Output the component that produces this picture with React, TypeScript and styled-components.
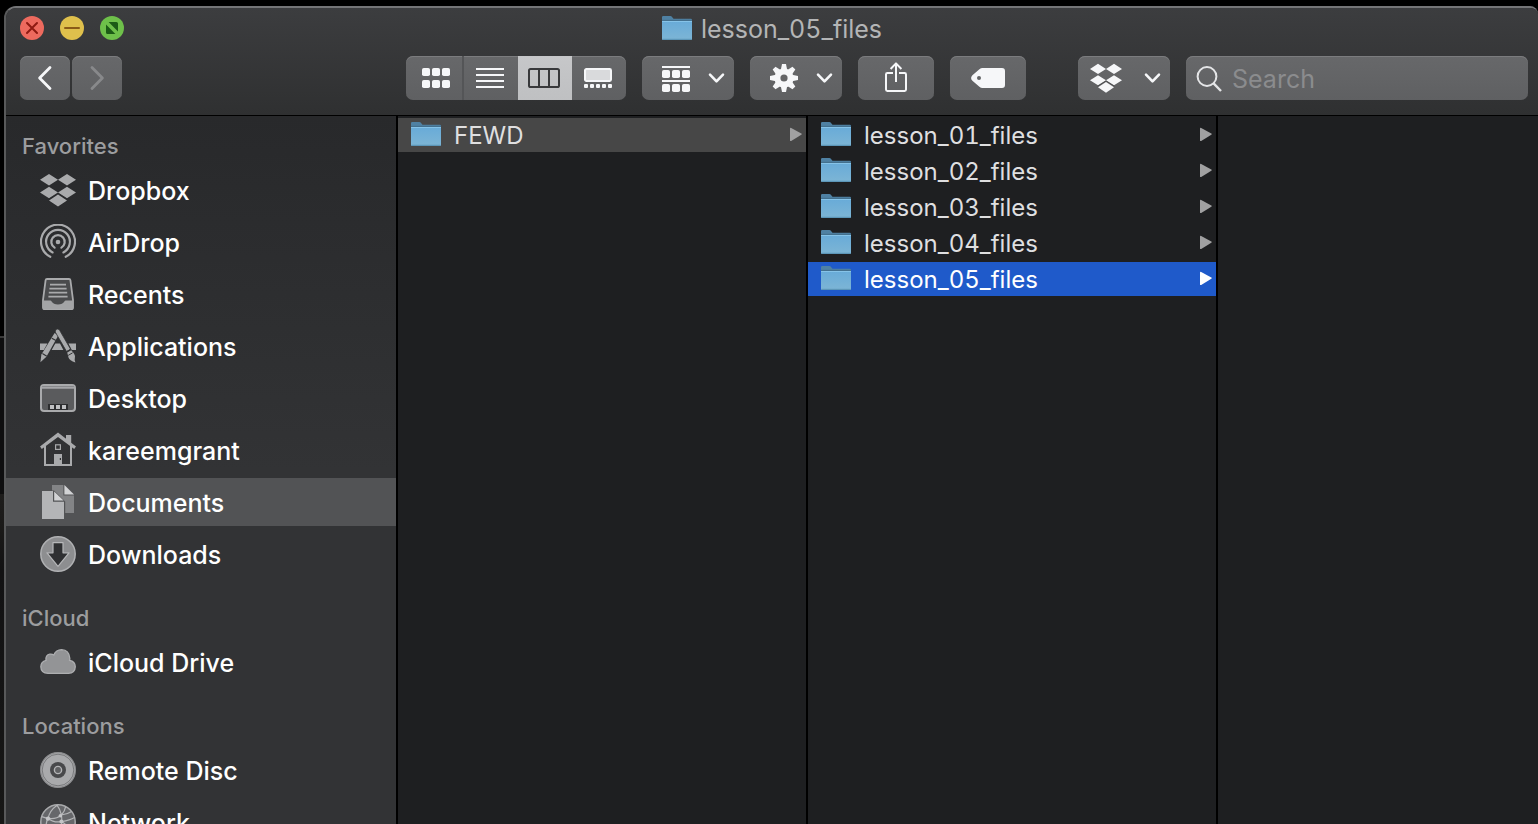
import React from "react";
import styled, { createGlobalStyle, css } from "styled-components";

const GlobalStyle = createGlobalStyle`
  *, *::before, *::after { box-sizing: border-box; }
  body {
    margin: 0;
    background: #000;
    font-family: Inter, "Liberation Sans", sans-serif;
    font-variant-numeric: tabular-nums;
    -webkit-font-smoothing: antialiased;
  }
  button, input { font: inherit; color: inherit; }
`;

/* ---------- layout ---------- */

const Desk = styled.div`
  height: 100vh;
  overflow: hidden;
  padding: 6px 0 0 4px;
  background: linear-gradient(#000 336px, #3a3a3a 336px, #3a3a3a 338px, #0e0e0f 338px, #0e0e0f 494px, #1e1d1c 494px, #1a1918 530px, #121213 570px, #171716);
`;

const Window = styled.div`
  height: 100%;
  display: flex;
  flex-direction: column;
  overflow: hidden;
  border-left: 2px solid #58595a;
  border-top: 2px solid #747577;
  border-radius: 12px 8px 0 0;
  background: #1e1f21;
`;

const Header = styled.header`
  flex: none;
  background: linear-gradient(#3c3d3f, #2f3031);
  border-bottom: 1px solid #000;
`;

const TitleBar = styled.div`
  display: grid;
  grid-template-columns: 1fr auto 1fr;
  align-items: center;
  height: 40px;
  padding: 0 14px;
`;

const Lights = styled.div`
  display: flex;
  gap: 16px;
`;

const Light = styled.button<{ $color: string }>`
  width: 24px;
  height: 24px;
  padding: 0;
  border: 0;
  border-radius: 50%;
  background: ${(p) => p.$color};
  svg { display: block; }
`;

const Title = styled.h1`
  display: flex;
  align-items: center;
  gap: 9px;
  margin: 0;
  padding-top: 2px;
  font-size: 25px;
  line-height: 32px;
  font-weight: 400;
  color: #b4b5b6;
`;

const Toolbar = styled.div`
  display: flex;
  align-items: center;
  height: 67px;
  padding: 8px 10px 15px 14px;
`;

const Spacer = styled.div`
  flex: 1;
`;

const Group = styled.div<{ $gap?: number; $end?: number }>`
  display: flex;
  gap: ${(p) => p.$gap ?? 0}px;
  margin-right: ${(p) => p.$end ?? 0}px;
`;

const surface = css`
  background: linear-gradient(#67686a, #5f6062);
  box-shadow: inset 0 1px 0 #7b7c7e;
`;

const ToolButton = styled.button<{ $width: number; $menu?: boolean; $start?: number }>`
  ${surface}
  display: flex;
  align-items: center;
  justify-content: ${(p) => (p.$menu ? "space-between" : "center")};
  width: ${(p) => p.$width}px;
  height: 44px;
  padding: ${(p) => (p.$menu ? `0 9px 0 ${p.$start ?? 20}px` : "0")};
  border: 0;
  border-radius: 7px;
  color: #f6f7f9;
  &:disabled { color: #88898b; }
`;

const Segments = styled.div`
  ${surface}
  display: flex;
  border-radius: 7px;
  overflow: hidden;
  margin-right: 16px;
`;

const Segment = styled.button<{ $first?: boolean }>`
  display: flex;
  align-items: center;
  justify-content: center;
  width: ${(p) => (p.$first ? 58 : 54)}px;
  height: 44px;
  padding: ${(p) => (p.$first ? "0 0 0 4px" : "0 2px 0 0")};
  border: 0;
  border-right: ${(p) => (p.$first ? "2px solid #545557" : "0")};
  background: transparent;
  color: #f6f7f9;
  &[aria-pressed="true"] {
    background: linear-gradient(#c6c7c9, #bfc0c2);
    color: #38393b;
  }
`;

const SearchField = styled.label`
  ${surface}
  display: flex;
  align-items: center;
  gap: 10px;
  width: 342px;
  height: 44px;
  padding: 2px 10px 0;
  border-radius: 7px;
  color: #e4e5e7;
`;

const SearchInput = styled.input`
  flex: 1;
  min-width: 0;
  padding: 0;
  border: 0;
  outline: 0;
  background: transparent;
  font-size: 25px;
  line-height: 32px;
  &::placeholder { color: #8b8c8e; opacity: 1; }
`;

const Body = styled.div`
  flex: 1;
  min-height: 0;
  display: flex;
`;

const Sidebar = styled.nav`
  flex: none;
  width: 392px;
  overflow: hidden;
  padding-top: 10px;
  border-right: 2px solid #000;
  background: linear-gradient(#28292b, #323335 50%, #323335);
`;

const Section = styled.section`
  margin-bottom: 20px;
`;

const SectionTitle = styled.h2`
  margin: 0;
  padding-left: 16px;
  font-size: 22px;
  line-height: 40px;
  font-weight: 500;
  color: #9c9d9f;
`;

const Places = styled.ul`
  display: flex;
  flex-direction: column;
  gap: 4px;
  margin: 0;
  padding: 0;
  list-style: none;
`;

const Place = styled.a`
  display: flex;
  align-items: center;
  gap: 12px;
  height: 48px;
  padding-left: 34px;
  font-size: 25px;
  line-height: 32px;
  font-weight: 500;
  color: #fff;
  text-decoration: none;
  &[aria-current] { background: #525355; }
  svg { flex: none; }
`;

const PlaceName = styled.span`
  padding-top: 2px;
`;

const Column = styled.ul<{ $last?: boolean }>`
  display: flex;
  flex-direction: column;
  gap: 2px;
  flex: ${(p) => (p.$last ? "1" : "0 0 410px")};
  margin: 0;
  padding: 2px 0 0;
  border-right: ${(p) => (p.$last ? "0" : "2px solid #000")};
  list-style: none;
`;

const Entry = styled.button<{ $tone?: "open" | "selected" }>`
  display: flex;
  align-items: center;
  width: 100%;
  height: 34px;
  padding: 0 4px 0 13px;
  border: 0;
  background: ${(p) => (p.$tone === "selected" ? "#1f5aca" : p.$tone === "open" ? "#474747" : "transparent")};
  color: ${(p) => (p.$tone === "selected" ? "#fff" : "#dfdfe0")};
  font-size: 24px;
  line-height: 32px;
  text-align: left;
`;

const EntryName = styled.span`
  flex: 1;
  padding: 2px 0 0 13px;
`;

const Disclosure = styled.svg<{ $bright?: boolean }>`
  color: ${(p) => (p.$bright ? "#fff" : "#a0a0a1")};
`;

/* ---------- icons ---------- */

const Folder = () => (
  <svg width="30" height="26" viewBox="0 0 30 26" aria-hidden="true">
    <defs>
      <linearGradient id="folderFront" x1="0" y1="0" x2="0" y2="1">
        <stop offset="0" stopColor="#68abd8" />
        <stop offset="1" stopColor="#7db5d5" />
      </linearGradient>
    </defs>
    <path d="M0 1.2Q0 0 1.2 0H8.4Q9.3 0 9.9 .8L11.2 2.4Q11.6 2.8 12.4 2.8H28.8Q30 2.8 30 4V11H0Z" fill="#4f81a3" />
    <path d="M0 5H30V22.8Q30 24 28.8 24H1.2Q0 24 0 22.8Z" fill="url(#folderFront)" />
    <path d="M0 4.4H30" stroke="#3f6a86" strokeWidth=".8" />
    <path d="M0 5.5H30" stroke="#86c3e8" strokeWidth="1" />
    <path d="M.4 23.4H29.6" stroke="#5c96b8" strokeWidth="1.2" />
  </svg>
);

const Triangle = ({ bright }: { bright?: boolean }) => (
  <Disclosure $bright={bright} width="12" height="16" viewBox="0 0 12 16" aria-hidden="true">
    <path d="M0 1.6Q0 .4 1.2 1L11.3 6.4Q12.4 7.1 11.3 7.8L1.2 13.9Q0 14.5 0 13.2Z" fill="currentColor" />
  </Disclosure>
);

const Chevron = () => (
  <svg width="17" height="12" viewBox="0 0 17 12" fill="none" stroke="currentColor" strokeWidth="2.6" strokeLinecap="round" strokeLinejoin="round" aria-hidden="true">
    <path d="M2 2.6L8.5 9.4L15 2.6" />
  </svg>
);

const Arrow = ({ d }: { d: string }) => (
  <svg width="18" height="26" viewBox="0 0 18 26" fill="none" stroke="currentColor" strokeWidth="2.8" strokeLinecap="round" strokeLinejoin="round" aria-hidden="true">
    <path d={d} />
  </svg>
);

const cells = (y: number, size: number) =>
  [0, 10, 20].map((x) => <rect key={`${x}-${y}`} x={x} y={y} width={size} height={size} rx="1.8" />);

const GridIcon = () => (
  <svg width="28" height="20" viewBox="0 0 28 20" fill="currentColor" aria-hidden="true">
    {cells(0, 8)}
    {cells(12, 8)}
  </svg>
);

const ListIcon = () => (
  <svg width="28" height="20" viewBox="0 0 28 20" fill="currentColor" aria-hidden="true">
    {[0, 6, 12, 18].map((y) => <rect key={y} y={y} width="28" height="2" />)}
  </svg>
);

const ColumnsIcon = () => (
  <svg width="32" height="20" viewBox="0 0 32 20" fill="none" stroke="currentColor" strokeWidth="2" aria-hidden="true">
    <rect x="1" y="1" width="30" height="18" rx="1.6" />
    <path d="M11 1V19M21 1V19" />
  </svg>
);

const GalleryIcon = () => (
  <svg width="28" height="20" viewBox="0 0 28 20" fill="currentColor" aria-hidden="true">
    <rect x="1" y="1" width="26" height="12" rx="1.4" fill="#d9dadc" stroke="currentColor" strokeWidth="2" />
    {[0, 6, 12, 18, 24].map((x) => <rect key={x} x={x} y="16" width="4" height="4" rx="1" />)}
  </svg>
);

const ArrangeIcon = () => (
  <svg width="28" height="28" viewBox="0 0 28 28" fill="currentColor" aria-hidden="true">
    <rect y="2" width="28" height="2" />
    {cells(6, 8)}
    <rect y="16" width="28" height="2" />
    {cells(20, 8)}
  </svg>
);

const GearIcon = () => (
  <svg width="28" height="28" viewBox="-14 -14 28 28" fill="currentColor" aria-hidden="true">
    {[0, 45, 90, 135].map((a) => <path key={a} d="M-2 -14H2L3.2 -8V8L2 14H-2L-3.2 8V-8Z" transform={`rotate(${a})`} />)}
    <circle r="9.6" />
    <circle r="3.6" fill="#646567" />
  </svg>
);

const ShareIcon = () => (
  <svg width="24" height="32" viewBox="0 0 24 32" fill="none" stroke="currentColor" strokeWidth="2" aria-hidden="true">
    <path d="M9 11H3.4Q2 11 2 12.4V27.6Q2 29 3.4 29H20.6Q22 29 22 27.6V12.4Q22 11 20.6 11H15" />
    <path d="M12 20V1.4" />
    <path d="M6.6 7L12 1.4L17.4 7" strokeLinejoin="round" />
  </svg>
);

const TagIcon = () => (
  <svg width="34" height="20" viewBox="0 0 34 20" aria-hidden="true">
    <path d="M8.4 1.2Q9.8 0 11.6 0H31Q34 0 34 3V17Q34 20 31 20H11.6Q9.8 20 8.4 18.8L1.4 12.8Q-1.2 10 1.4 7.2Z" fill="currentColor" />
    <circle cx="8" cy="10" r="2" fill="#646567" />
  </svg>
);

const DropboxIcon = ({ size, color }: { size: number; color: string }) => (
  <svg width={size} height={size} viewBox="0 0 36 36" fill={color} aria-hidden="true">
    <path d="M9 2L18 7.8L9 13.6L0 7.8ZM27 2L36 7.8L27 13.6L18 7.8ZM9 14.8L18 20.6L9 26.2L0 20.6ZM27 14.8L36 20.6L27 26.2L18 20.6ZM18 22.4L27 28.4L18 34.6L9 28.4Z" />
    <path d="M8.6 27.2L18 21.2L27.4 27.2" fill="none" stroke="#2b2c2e" strokeOpacity=".45" strokeWidth="1" />
  </svg>
);

const SearchIcon = () => (
  <svg width="26" height="26" viewBox="0 0 26 26" fill="none" stroke="currentColor" strokeWidth="2" aria-hidden="true">
    <circle cx="11" cy="10.5" r="9.4" />
    <path d="M17.6 17.4L25 25" strokeWidth="2.4" />
  </svg>
);

const Glyph = ({ children }: { children: React.ReactNode }) => (
  <svg width="36" height="36" viewBox="0 0 36 36" fill="#a9aaac" aria-hidden="true">{children}</svg>
);

const AirDropIcon = () => (
  <Glyph>
    <g fill="none" stroke="#a9aaac" strokeWidth="2.2" strokeLinecap="round">
      <path d="M10.3 32.8A17 17 0 1 1 25.7 32.8" />
      <path d="M12.6 28.4A11.9 11.9 0 1 1 23.4 28.4" />
      <path d="M14.6 23.6A6.7 6.7 0 1 1 21.4 23.6" />
    </g>
    <circle cx="18" cy="18" r="2.3" />
  </Glyph>
);

const RecentsIcon = () => (
  <Glyph>
    <path d="M7 3H29Q30.2 3 30.4 4.2L33 24V31.5Q33 33.2 31.3 33.2H4.7Q3 33.2 3 31.5V24L5.6 4.2Q5.8 3 7 3Z" fill="#4a4b4d" stroke="#a9aaac" strokeWidth="1.8" />
    <path d="M10 8.7H26M9.4 12.7H26.6M8.8 16.7H27.2M8.4 20.7H27.6" stroke="#a9aaac" strokeWidth="1.7" />
    <path d="M3 24.4H10.2Q11.2 24.4 11.6 25.4Q13.4 28.4 18 28.4Q22.6 28.4 24.4 25.4Q24.8 24.4 25.8 24.4H33V32Q33 33 32 33H4Q3 33 3 32Z" fill="#a3a4a6" />
  </Glyph>
);

const ApplicationsIcon = () => (
  <Glyph>
    <path d="M0 15.6H7.4L3.8 22H0ZM15.3 15.6H20L23.4 22H11.7ZM28.4 15.6H36V22H31.8Z" />
    <path d="M14.6 5L18.4 7.2L6.4 28.8L.4 34.2L1.4 26.6Z" />
    <path d="M11.8 10.2L16 12.6M2.4 25.6L6.8 28.2" stroke="#323335" strokeWidth="1.2" />
    <path d="M15.4 3Q15.6 .8 17.8 1Q19 1.2 19.8 2.6L30.6 21.2L26.6 23.6L15.6 4.6Q15.2 3.8 15.4 3Z" stroke="#323335" strokeWidth=".8" />
    <path d="M27.2 24.6L31.2 22.2Q34.8 25.8 35 28.2Q34.2 32 35.4 34.6Q29.4 32.6 28.6 29.8Z" />
    <path d="M26.4 23.8L30.8 21.2M28.2 27.4L32.6 24.8" stroke="#323335" strokeWidth="1" />
  </Glyph>
);

const DesktopIcon = () => (
  <Glyph>
    <rect x="1" y="5" width="34" height="26" rx="3" fill="#5a5b5d" stroke="#a9aaac" strokeWidth="2" />
    <path d="M2 7.4H34" stroke="#a9aaac" strokeWidth="2.6" />
    <path d="M2 6.6H34" stroke="#7e7f81" strokeWidth=".8" />
    <rect x="8" y="24" width="20" height="6" fill="#2d2e30" />
    <path d="M10 25h4v4h-4zM16 25h4v4h-4zM22 25h4v4h-4z" fill="#c0c1c3" />
  </Glyph>
);

const HomeIcon = () => (
  <Glyph>
    <path d="M4 14V34H32V14L30 12.4V32H6V12.4Z" />
    <path d="M26 9.6V3H31.2V13.6Z" />
    <path d="M18 .6L36 14.4L34.2 17L18 5L1.8 17L0 14.4Z" />
    <rect x="15.6" y="12.8" width="4.8" height="4.6" fill="none" stroke="#a9aaac" strokeWidth="1.2" />
    <rect x="14" y="22" width="8" height="11" />
    <rect x="19.8" y="26" width="1.2" height="2" fill="#323335" />
  </Glyph>
);

const DocumentsIcon = () => (
  <Glyph>
    <path d="M12 1H23.4V11.6H34V29H25.2V17.6L14 6.4H12Z" fill="#838486" />
    <path d="M24.4 1L34 10.4H24.4Z" fill="#d2d3d5" />
    <path d="M2 7H13V17.8H24V35H2Z" fill="#b4b5b7" />
    <path d="M14.2 7.4L23.6 16.6H14.2Z" fill="#d2d3d5" />
  </Glyph>
);

const DownloadsIcon = () => (
  <Glyph>
    <circle cx="18" cy="18" r="17.2" fill="#8d8e90" stroke="#b0b1b3" strokeWidth="1.5" />
    <path d="M13 6.6H23V16.8H29L18 30.4L7 16.8H13Z" fill="#2f3032" stroke="#b6b7b9" strokeWidth="1.2" strokeLinejoin="round" />
  </Glyph>
);

const CloudIcon = () => (
  <Glyph>
    <path d="M8 29.4Q1 29.2 .8 22.8Q.9 17.6 6 16.4Q5.4 11 9.8 10.2Q12 9.8 13.8 11Q16 5.8 21.6 5.7Q29 6 29.8 14.2Q29.8 15.4 29.6 16.4Q35.2 17.4 35.3 22.8Q35 29.2 28.4 29.4Z" fill="#939496" stroke="#adaeb0" strokeWidth="1.3" />
  </Glyph>
);

const DiscIcon = () => (
  <Glyph>
    <circle cx="18" cy="18" r="17.4" fill="#a9aaac" stroke="#8d8e90" strokeWidth="1.2" />
    <circle cx="18" cy="18" r="15.8" fill="none" stroke="#737476" strokeWidth=".9" />
    <circle cx="18" cy="18" r="8" fill="#48494b" />
    <circle cx="18" cy="18" r="3.6" fill="#5f6062" stroke="#b4b5b7" strokeWidth="1.4" />
  </Glyph>
);

const NetworkIcon = () => (
  <Glyph>
    <circle cx="18" cy="18" r="17.2" fill="#66676a" stroke="#a9aaac" strokeWidth="1.5" />
    <g fill="none" stroke="#b4b5b7" strokeWidth="1.2">
      <path d="M1.6 12.6Q14 17.4 21.4 11Q25 7 25.6 2.6M8 14.4Q9.6 6.6 17 1.2M21.4 11Q27 10.6 31.6 7.6M21.4 11Q20 5 17 1.2M8 14.4Q5 20 6.4 29M8 14.4Q14 19 21.6 17.6Q30 16 34.6 13.4M21.4 11Q23 22 18 34.6M21.6 17.6Q29 22 30 28" />
    </g>
    <circle cx="8" cy="14.6" r="2.2" fill="#c4c5c7" />
    <circle cx="20.4" cy="11.8" r="1.8" fill="#c4c5c7" />
    <circle cx="21.4" cy="17.6" r="2" fill="#c4c5c7" />
  </Glyph>
);

/* ---------- data ---------- */

const sections = [
  {
    title: "Favorites",
    places: [
      { name: "Dropbox", icon: <DropboxIcon size={36} color="#a9aaac" /> },
      { name: "AirDrop", icon: <AirDropIcon /> },
      { name: "Recents", icon: <RecentsIcon /> },
      { name: "Applications", icon: <ApplicationsIcon /> },
      { name: "Desktop", icon: <DesktopIcon /> },
      { name: "kareemgrant", icon: <HomeIcon /> },
      { name: "Documents", icon: <DocumentsIcon />, current: true },
      { name: "Downloads", icon: <DownloadsIcon /> },
    ],
  },
  { title: "iCloud", places: [{ name: "iCloud Drive", icon: <CloudIcon /> }] },
  {
    title: "Locations",
    places: [
      { name: "Remote Disc", icon: <DiscIcon /> },
      { name: "Network", icon: <NetworkIcon /> },
    ],
  },
] as { title: string; places: { name: string; icon: React.ReactNode; current?: boolean }[] }[];

const lessons = ["lesson_01_files", "lesson_02_files", "lesson_03_files", "lesson_04_files", "lesson_05_files"];

const views = [
  { name: "Icons", icon: <GridIcon /> },
  { name: "List", icon: <ListIcon /> },
  { name: "Columns", icon: <ColumnsIcon /> },
  { name: "Gallery", icon: <GalleryIcon /> },
];

const FileEntry = ({ name, tone }: { name: string; tone?: "open" | "selected" }) => (
  <li>
    <Entry type="button" $tone={tone}>
      <Folder />
      <EntryName>{name}</EntryName>
      <Triangle bright={tone === "selected"} />
    </Entry>
  </li>
);

export default function App() {
  const [view, setView] = React.useState("Columns");
  return (
    <>
      <GlobalStyle />
      <Desk>
        <Window>
          <Header>
            <TitleBar>
              <Lights>
                <Light type="button" aria-label="Close" $color="#ed6a5e">
                  <svg width="24" height="24" viewBox="0 0 24 24" stroke="#8e1a12" strokeWidth="2" strokeLinecap="round">
                    <path d="M7 7L17 17M17 7L7 17" />
                  </svg>
                </Light>
                <Light type="button" aria-label="Minimize" $color="#dfc04c">
                  <svg width="24" height="24" viewBox="0 0 24 24" stroke="#8a5b18" strokeWidth="2" strokeLinecap="round">
                    <path d="M5 12H19" />
                  </svg>
                </Light>
                <Light type="button" aria-label="Zoom" $color="#6ec04a">
                  <svg width="24" height="24" viewBox="0 0 24 24" fill="#1c5b16">
                    <path d="M8.6 6H16.4Q18 6 18 7.6V15.4ZM6 8.6V16.4Q6 18 7.6 18H15.4Z" />
                  </svg>
                </Light>
              </Lights>
              <Title>
                <Folder />
                lesson_05_files
              </Title>
            </TitleBar>
            <Toolbar>
              <Group $gap={2}>
                <ToolButton type="button" aria-label="Back" $width={50}>
                  <Arrow d="M14 2.4L3.6 13L14 23.6" />
                </ToolButton>
                <ToolButton type="button" aria-label="Forward" $width={50} disabled>
                  <Arrow d="M4 2.4L14.4 13L4 23.6" />
                </ToolButton>
              </Group>
              <Spacer />
              <Segments role="group" aria-label="View">
                {views.map((v, i) => (
                  <Segment key={v.name} type="button" aria-label={v.name} aria-pressed={view === v.name} $first={i === 0} onClick={() => setView(v.name)}>
                    {v.icon}
                  </Segment>
                ))}
              </Segments>
              <Group $gap={16} $end={52}>
                <ToolButton type="button" aria-label="Arrange" aria-haspopup="menu" $width={92} $menu>
                  <ArrangeIcon />
                  <Chevron />
                </ToolButton>
                <ToolButton type="button" aria-label="Actions" aria-haspopup="menu" $width={92} $menu>
                  <GearIcon />
                  <Chevron />
                </ToolButton>
                <ToolButton type="button" aria-label="Share" $width={76}>
                  <ShareIcon />
                </ToolButton>
                <ToolButton type="button" aria-label="Tags" $width={76}>
                  <TagIcon />
                </ToolButton>
              </Group>
              <Group $end={16}>
                <ToolButton type="button" aria-label="Dropbox" aria-haspopup="menu" $width={92} $menu $start={12}>
                  <DropboxIcon size={32} color="#f6f7f9" />
                  <Chevron />
                </ToolButton>
              </Group>
              <SearchField>
                <SearchIcon />
                <SearchInput type="search" aria-label="Search" placeholder="Search" />
              </SearchField>
            </Toolbar>
          </Header>
          <Body>
            <Sidebar aria-label="Sidebar">
              {sections.map((s) => (
                <Section key={s.title}>
                  <SectionTitle>{s.title}</SectionTitle>
                  <Places>
                    {s.places.map((p) => (
                      <li key={p.name}>
                        <Place href="#" aria-current={p.current ? "page" : undefined}>
                          {p.icon}
                          <PlaceName>{p.name}</PlaceName>
                        </Place>
                      </li>
                    ))}
                  </Places>
                </Section>
              ))}
            </Sidebar>
            <Column>
              <FileEntry name="FEWD" tone="open" />
            </Column>
            <Column>
              {lessons.map((name) => (
                <FileEntry key={name} name={name} tone={name === "lesson_05_files" ? "selected" : undefined} />
              ))}
            </Column>
            <Column $last />
          </Body>
        </Window>
      </Desk>
    </>
  );
}
